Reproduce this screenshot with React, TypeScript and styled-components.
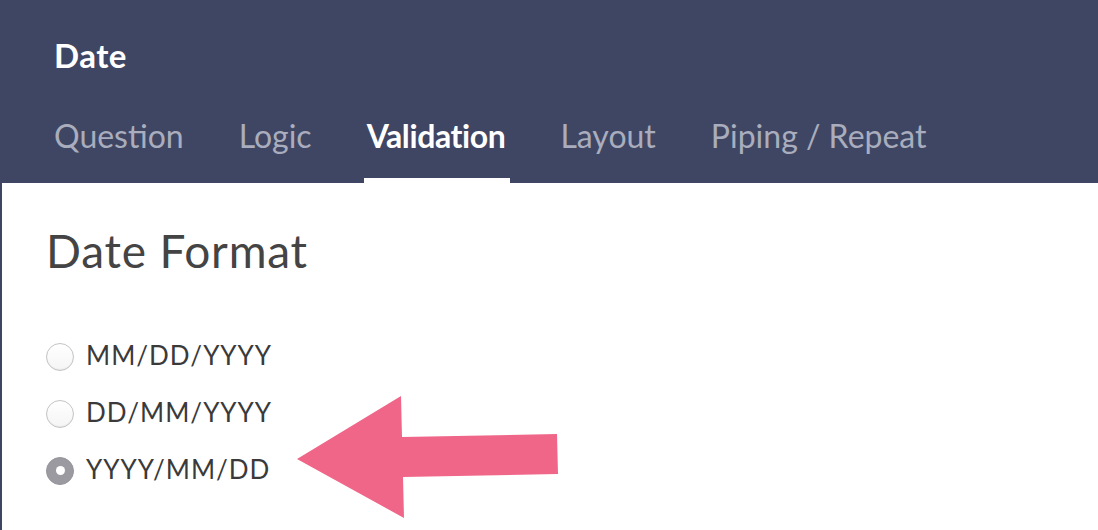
import React from "react";
import { styled, createGlobalStyle } from "styled-components";

const GlobalStyle = createGlobalStyle`
  html, body {
    margin: 0;
    padding: 0;
    height: 100%;
  }
  body {
    font-family: Lato, "Open Sans", sans-serif;
    background: #3f4663;
  }
  #root {
    height: 100%;
  }
`;

const tabs = ["Question", "Logic", "Validation", "Layout", "Piping / Repeat"];
const formats = ["MM/DD/YYYY", "DD/MM/YYYY", "YYYY/MM/DD"];

const App = () => {
  const [selected, setSelected] = React.useState(2);
  const [activeTab, setActiveTab] = React.useState(2);

  return (
    <Page>
      <GlobalStyle />
      <Header>
        <Title>Date</Title>
        <Tabs>
          {tabs.map((t, i) => (
            <Tab key={t} $active={i === activeTab} onClick={() => setActiveTab(i)}>
              {t}
            </Tab>
          ))}
        </Tabs>
      </Header>
      <Panel>
        <Heading>Date Format</Heading>
        <Options>
          {formats.map((f, i) => (
            <Option key={f} onClick={() => setSelected(i)}>
              <Radio $checked={i === selected} />
              <span>{f}</span>
            </Option>
          ))}
        </Options>
        <Arrow viewBox="0 0 262 124" width="262" height="124">
          <polygon
            points="1,63 105,0 106,41 261,38 262,78 107,81 108,122"
            fill="#f06688"
          />
        </Arrow>
      </Panel>
    </Page>
  );
};

export default App;

const Page = styled.div`
  display: flex;
  flex-direction: column;
  height: 100%;
  min-height: 530px;
`;

const Header = styled.div`
  display: flex;
  flex-direction: column;
  height: 183px;
  box-sizing: border-box;
  padding: 37px 0 0 55px;
  background: #3f4663;
`;

const Title = styled.div`
  font-size: 33px;
  font-weight: 700;
  color: #ffffff;
  line-height: 36px;
  letter-spacing: 0.5px;
  margin-left: -1px;
`;

const Tabs = styled.div`
  display: flex;
  gap: 55px;
  margin: 44px 0 0 -1px;
`;

const Tab = styled.div<{ $active: boolean }>`
  font-size: 32px;
  font-weight: ${(p) => (p.$active ? 700 : 400)};
  letter-spacing: ${(p) => (p.$active ? "-0.4px" : "0")};
  color: ${(p) => (p.$active ? "#ffffff" : "#a9adbd")};
  line-height: 38px;
  padding: 0 5px 23px 3px;
  margin: 0 -5px 0 -3px;
  border-bottom: 5px solid ${(p) => (p.$active ? "#ffffff" : "transparent")};
  cursor: pointer;
`;

const Panel = styled.div`
  position: relative;
  flex: 1;
  margin-left: 2px;
  background: #ffffff;
  padding: 41px 0 0 44px;
`;

const Heading = styled.h2`
  margin: 0;
  font-size: 46px;
  font-weight: 400;
  color: #444444;
  line-height: 54px;
  letter-spacing: 0.8px;
`;

const Options = styled.div`
  display: flex;
  flex-direction: column;
  gap: 23px;
  margin-top: 60px;
`;

const Option = styled.label`
  display: flex;
  align-items: center;
  gap: 12px;
  font-size: 26px;
  letter-spacing: 1px;
  color: #3a3a3a;
  line-height: 34px;
  cursor: pointer;
`;

const Radio = styled.span<{ $checked: boolean }>`
  position: relative;
  width: 28px;
  height: 28px;
  margin-top: 3px;
  box-sizing: border-box;
  border-radius: 50%;
  border: 1px solid ${(p) => (p.$checked ? "#96969c" : "#c4c4c4")};
  background: ${(p) => (p.$checked ? "#9a9aa0" : "linear-gradient(180deg, #ffffff 0%, #f5f5f5 100%)")};
  box-shadow: ${(p) => (p.$checked ? "none" : "inset 0 -1px 1px rgba(0,0,0,0.06)")};
  &::after {
    content: "";
    display: ${(p) => (p.$checked ? "block" : "none")};
    position: absolute;
    left: 50%;
    top: 50%;
    width: 9px;
    height: 9px;
    margin: -4.5px 0 0 -4.5px;
    border-radius: 50%;
    background: #ffffff;
  }
`;

const Arrow = styled.svg`
  position: absolute;
  left: 294px;
  top: 213px;
`;
